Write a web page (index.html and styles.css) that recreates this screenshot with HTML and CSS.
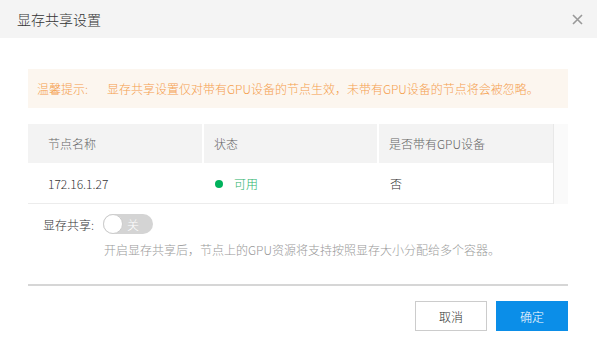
FILE: index.html
```html
<!DOCTYPE html>
<html lang="zh-CN">
  <head>
    <meta charset="UTF-8" />
    <meta name="viewport" content="width=device-width, initial-scale=1.0" />
    <title>显存共享设置</title>
    <link rel="stylesheet" href="styles.css">
  </head>
  <body>
    <div class="dialog">
      <div class="dialog-header">
        <span class="dialog-title">显存共享设置</span>
        <span class="dialog-close">
          <svg width="11" height="11" viewBox="0 0 11 11">
            <path d="M1 1 L10 10 M10 1 L1 10" stroke="#999" stroke-width="1.6" fill="none" />
          </svg>
        </span>
      </div>

      <div class="dialog-body">
        <!-- tip -->
        <div class="tip">
          <span class="tip-label">温馨提示:</span>
          <span>显存共享设置仅对带有GPU设备的节点生效，未带有GPU设备的节点将会被忽略。</span>
        </div>

        <!-- node table -->
        <div class="table-wrap">
          <table class="node-table">
            <colgroup>
              <col class="col" />
              <col class="col" />
              <col class="col" />
            </colgroup>
            <thead>
              <tr>
                <th>节点名称</th>
                <th>状态</th>
                <th>是否带有GPU设备</th>
              </tr>
            </thead>
            <tbody>
              <tr>
                <td>172.16.1.27</td>
                <td><span class="dot"></span><span class="ok">可用</span></td>
                <td>否</td>
              </tr>
            </tbody>
          </table>
          <div class="scroll-gutter"></div>
        </div>

        <!-- switch -->
        <div class="form-row">
          <span class="form-label">显存共享:</span>
          <span class="switch"><span class="knob"></span><span class="switch-text">关</span></span>
        </div>
        <p class="help">开启显存共享后，节点上的GPU资源将支持按照显存大小分配给多个容器。</p>
      </div>

      <div class="dialog-footer">
        <button class="btn">取消</button>
        <button class="btn btn-primary">确定</button>
      </div>
    </div>
  </body>
</html>
```

FILE: styles.css
```css
body {
  margin: 0;
  background: #fff;
  font-family: "Noto Sans CJK SC", "Noto Sans", sans-serif;
  font-size: 12px;
  font-weight: 300;
  color: #333;
}
.dialog {
  width: 597px;
  height: 349px;
  background: #fff;
}
.dialog-header {
  height: 38px;
  background: #f4f4f4;
  display: flex;
  align-items: center;
  justify-content: space-between;
  padding: 0 17px;
}
.dialog-title {
  font-size: 14px;
  color: #333;
}
.dialog-close {
  display: flex;
  margin-right: -3px;
}
.dialog-body {
  padding: 31px 29px 0 28px;
}
.tip {
  height: 39px;
  background: #fcf6ef;
  color: #f5a04e;
  display: flex;
  align-items: center;
  padding-left: 9px;
}
.tip-label {
  width: 70px;
}
.table-wrap {
  display: flex;
  margin-top: 16px;
}
.node-table {
  width: 525px;
  border-collapse: collapse;
  table-layout: fixed;
  border-bottom: 1px solid #ececec;
}
.col {
  width: 175px;
}
.node-table th {
  background: #f3f3f3;
  font-weight: 300;
  color: #666;
  text-align: left;
  height: 39px;
  padding: 0 0 0 10px;
  border-left: 2px solid #fff;
}
.node-table th:first-child {
  border-left: none;
  padding-left: 20px;
}
.node-table td {
  height: 40px;
  padding: 0 0 0 12px;
  color: #333;
}
.node-table td:first-child {
  padding-left: 20px;
}
.dot {
  display: inline-block;
  width: 8px;
  height: 8px;
  border-radius: 50%;
  background: #00b25c;
  margin-right: 11px;
  vertical-align: middle;
  position: relative;
  top: -1px;
}
.ok {
  color: #2bb36b;
}
.scroll-gutter {
  width: 14px;
  background: #fafafa;
  border-left: 1px solid #e8e8e8;
}
.form-row {
  display: flex;
  align-items: center;
  margin-top: 10px;
  padding-left: 15px;
}
.form-label {
  width: 60px;
}
.switch {
  position: relative;
  width: 50px;
  height: 20px;
  border-radius: 10px;
  background: #d4d4d4;
  display: inline-flex;
  align-items: center;
}
.knob {
  position: absolute;
  left: 0;
  top: 0;
  width: 18px;
  height: 18px;
  border-radius: 50%;
  background: #fff;
  border: 1px solid #ccc;
}
.switch-text {
  color: #fff;
  margin-left: 24px;
}
.help {
  margin: 7px 0 0 76px;
  color: #999;
}
.dialog-footer {
  margin: 26px 29px 0 28px;
  border-top: 2px solid #d6d6d6;
  padding-top: 15px;
  display: flex;
  justify-content: flex-end;
  gap: 9px;
}
.btn {
  width: 72px;
  height: 30px;
  border: 1px solid #ccc;
  background: #fff;
  color: #333;
  font-family: inherit;
  font-size: 12px;
  font-weight: 300;
  padding: 0;
}
.btn-primary {
  background: #0b8ee8;
  border-color: #0b8ee8;
  color: #fff;
}
```
